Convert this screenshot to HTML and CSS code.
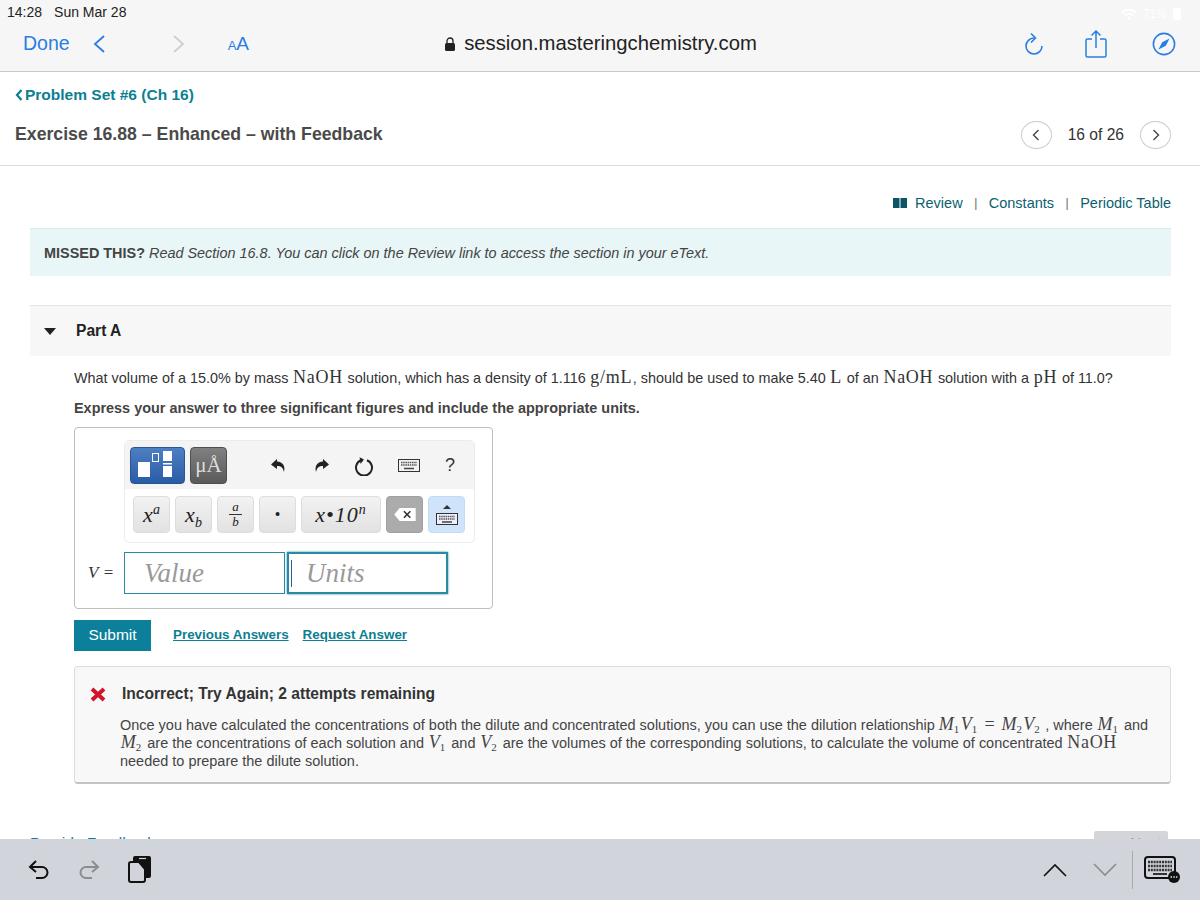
FILE: index.html
```html
<!DOCTYPE html>
<html lang="en">
<head>
  <meta charset="UTF-8">
  <title>Exercise 16.88</title>
  <link rel="stylesheet" href="styles.css">
</head>
<body>
  <div class="screen">
    <header class="browser">
      <div class="status">
        <span><span class="clock">14:28</span><span>Sun Mar 28</span></span>
        <span class="status-right">
          <svg width="16" height="12" viewBox="0 0 16 12"><path d="M1 4.500a10 10 0 0 1 14 0M4 7.500a6 6 0 0 1 8 0" fill="none" stroke="#fff" stroke-width="2"/><circle cx="8" cy="10" r="1.500" fill="#fff"/></svg>
          <span>71%</span>
          <svg width="8" height="12" viewBox="0 0 8 12"><rect width="8" height="12" rx="2" fill="#fff"/></svg>
        </span>
      </div>
      <div class="navbar">
        <div class="nav-left">
          <span class="done">Done</span>
          <svg class="chev" width="14" height="20" viewBox="0 0 14 20"><path d="M12 2 3 10l9 8" fill="none" stroke="#2a7de1" stroke-width="1.8"/></svg>
          <svg class="chev chev-next" width="14" height="20" viewBox="0 0 14 20"><path d="M2 2l9 8-9 8" fill="none" stroke="#cfcfcf" stroke-width="1.8"/></svg>
          <span class="aa"><small>A</small>A</span>
        </div>
        <div class="address">
          <svg width="12" height="14" viewBox="0 0 12 14"><rect x="1" y="6" width="10" height="8" rx="1.5" fill="#222"/><path d="M3 6V4a3 3 0 0 1 6 0v2" fill="none" stroke="#222" stroke-width="1.3"/></svg>
          <span>session.masteringchemistry.com</span>
        </div>
        <div class="nav-right">
          <svg class="reload" width="20" height="24" viewBox="0 0 20 24"><path d="M10 6A8 8 0 1 0 18 14" fill="none" stroke="#2a7de1" stroke-width="1.600"/><path d="M7 1.500 11.500 6 7 10.500" fill="none" stroke="#2a7de1" stroke-width="1.600"/></svg>
          <svg width="22" height="28" viewBox="0 0 22 28"><path d="M7 9H2.500A1.500 1.500 0 0 0 1 10.500v15A1.500 1.500 0 0 0 2.500 27h17a1.500 1.500 0 0 0 1.500-1.500v-15A1.500 1.500 0 0 0 19.500 9H15M11 18V1M6.500 5.500 11 1l4.500 4.500" fill="none" stroke="#2a7de1" stroke-width="1.500"/></svg>
          <svg width="24" height="24" viewBox="0 0 26 26"><circle cx="13" cy="13" r="11.500" fill="none" stroke="#2a7de1" stroke-width="1.700"/><path d="M19 7l-8 4-4 8 8-4z" fill="#2a7de1"/></svg>
        </div>
      </div>
    </header>

    <main class="page">
      <a class="crumb" href="#"><svg width="8" height="12" viewBox="0 0 8 12"><path d="M6.500 1 2 6l4.500 5" fill="none" stroke="#0c7f92" stroke-width="2.200"/></svg>Problem Set #6 (Ch 16)</a>

      <div class="title-row">
        <h1>Exercise 16.88 – Enhanced – with Feedback</h1>
        <div class="pager">
          <span class="round"><svg width="8" height="12" viewBox="0 0 8 12"><path d="M6.500 1 1.500 6l5 5" fill="none" stroke="#444" stroke-width="1.400"/></svg></span>
          <span class="count">16 of 26</span>
          <span class="round"><svg width="8" height="12" viewBox="0 0 8 12"><path d="M1.500 1l5 5-5 5" fill="none" stroke="#444" stroke-width="1.400"/></svg></span>
        </div>
      </div>

      <div class="links">
        <svg width="14" height="10" viewBox="0 0 14 10"><rect width="6.500" height="10" fill="#0b5566"/><rect x="7.500" width="6.500" height="10" fill="#0b5566"/></svg>
        <a href="#">Review</a><i>|</i><a href="#">Constants</a><i>|</i><a href="#">Periodic Table</a>
      </div>

      <div class="missed"><b>MISSED THIS?</b> <em>Read Section 16.8. You can click on the Review link to access the section in your eText.</em></div>

      <section class="part">
        <svg width="12" height="7" viewBox="0 0 12 7"><path d="M0 0h12L6 7z" fill="#222"/></svg>
        <strong>Part A</strong>
      </section>

      <div class="part-body">
        <p class="question">What volume of a 15.0% by mass <span class="tex">NaOH</span> solution, which has a density of 1.116 <span class="tex">g/mL</span>, should be used to make 5.40 <span class="tex">L</span> of an <span class="tex">NaOH</span> solution with a <span class="tex">pH</span> of 11.0?</p>
        <p class="express">Express your answer to three significant figures and include the appropriate units.</p>

        <div class="answer">
          <div class="palette">
            <div class="tools">
              <span class="mode mode-blue">
                <svg width="53" height="35" viewBox="0 0 53 35"><rect x="7" y="14" width="12" height="15" fill="#fff"/><rect x="21.500" y="5.500" width="6" height="8" fill="none" stroke="#fff"/><rect x="32" y="3" width="9" height="10" fill="#fff"/><rect x="32" y="15" width="9" height="1.500" fill="#fff"/><rect x="32" y="18" width="9" height="11" fill="#fff"/></svg>
              </span>
              <span class="mode mode-grey">μÅ</span>
              <span class="tool-icons">
                <svg width="18" height="18" viewBox="0 0 18 18"><path d="M7 2 1 7.500 7 12V9c4 0 6 1.500 7 6 1.500-6-1-10-7-10.500z" fill="#222"/></svg>
                <svg width="18" height="18" viewBox="0 0 18 18"><path d="M11 2l6 5.500-6 4.500V9c-4 0-6 1.500-7 6-1.500-6 1-10 7-10.500z" fill="#222"/></svg>
                <svg width="20" height="20" viewBox="0 0 20 20"><path d="M7 4.200a8 8 0 1 0 6 0" fill="none" stroke="#222" stroke-width="2"/><path d="M6 1v7l4-4z" fill="#222" transform="rotate(-8 7 4)"/></svg>
                <svg width="22" height="13" viewBox="0 0 22 13"><rect x=".5" y=".5" width="21" height="12" fill="#f2f2f2" stroke="#333"/><path d="M3 3.500h16M3 6h16" stroke="#555" stroke-width="1.500" stroke-dasharray="1.500 .7"/><path d="M6 9.500h10" stroke="#444" stroke-width="1.500"/></svg>
                <span class="help">?</span>
              </span>
            </div>
            <div class="keys">
              <span class="key"><i>x<sup>a</sup></i></span>
              <span class="key"><i>x<sub>b</sub></i></span>
              <span class="key frac"><i>a</i><i>b</i></span>
              <span class="key dot">•</span>
              <span class="key key-wide"><i>x•10<sup>n</sup></i></span>
              <span class="key key-del"><svg width="24" height="15" viewBox="0 0 22 14"><path d="M6 1h15v12H6L1 7z" fill="#fff"/><path d="M10 4l6 6m0-6-6 6" stroke="#333" stroke-width="1.500"/></svg></span>
              <span class="key key-kbd"><svg width="22" height="22" viewBox="0 0 22 22"><path d="M7 5l4-4 4 4z" fill="#333"/><rect x=".5" y="9.500" width="21" height="11" fill="#eef" stroke="#333"/><path d="M3 12.500h16M3 15h16" stroke="#555" stroke-width="1.500" stroke-dasharray="1.500 .7"/><path d="M6 18h10" stroke="#444" stroke-width="1.500"/></svg></span>
            </div>
          </div>
          <div class="entry">
            <span class="var"><i>V</i> =</span>
            <div class="field field-value">Value</div>
            <div class="field field-units"><span class="caret"></span>Units</div>
          </div>
        </div>

        <div class="actions">
          <button class="submit" type="button">Submit</button>
          <a href="#">Previous Answers</a>
          <a href="#">Request Answer</a>
        </div>

        <div class="feedback">
          <div class="fb-head">
            <svg width="16" height="15" viewBox="0 0 16 15"><path d="M2 2l12 11M14 2 2 13" stroke="#d0142c" stroke-width="4"/></svg>
            <b>Incorrect; Try Again; 2 attempts remaining</b>
          </div>
          <p>Once you have calculated the concentrations of both the dilute and concentrated solutions, you can use the dilution relationship <span class="tex tex-long"><i>M</i><sub>1</sub><i>V</i><sub>1</sub><span class="eq">=</span><i>M</i><sub>2</sub><i>V</i><sub>2</sub></span>, where <span class="tex"><i>M</i><sub>1</sub></span> and<br><span class="tex"><i>M</i><sub>2</sub></span> are the concentrations of each solution and <span class="tex"><i>V</i><sub>1</sub></span> and <span class="tex"><i>V</i><sub>2</sub></span> are the volumes of the corresponding solutions, to calculate the volume of concentrated <span class="tex">NaOH</span><br>needed to prepare the dilute solution.</p>
        </div>
      </div>

      <div class="below">
        <a href="#">Provide Feedback</a>
        <span class="next">Next &gt;</span>
      </div>
    </main>

    <footer class="kbdbar">
      <div class="kbd-left">
        <svg width="22" height="24" viewBox="0 0 22 24"><path d="M8 3 2 9l6 5M2 9h12a5.500 5.500 0 0 1 0 11H8" fill="none" stroke="#111" stroke-width="2"/></svg>
        <svg width="22" height="24" viewBox="0 0 22 24"><path d="M14 3l6 6-6 5M20 9H8a5.500 5.500 0 0 0 0 11h6" fill="none" stroke="#8b8d91" stroke-width="2"/></svg>
        <svg width="24" height="28" viewBox="0 0 24 28"><rect x="5" y="0" width="18" height="22" rx="2" fill="#111"/><path d="M11 2.500h7" stroke="#d1d4da" stroke-width="1.200"/><path d="M3 6h8l6 7v11a2 2 0 0 1-2 2H3a2 2 0 0 1-2-2V8a2 2 0 0 1 2-2z" fill="#d1d4da" stroke="#111" stroke-width="2"/></svg>
      </div>
      <div class="kbd-right">
        <svg width="24" height="14" viewBox="0 0 24 14"><path d="M1 13 12 2l11 11" fill="none" stroke="#111" stroke-width="1.600"/></svg>
        <svg width="24" height="14" viewBox="0 0 24 14"><path d="M1 1l11 11L23 1" fill="none" stroke="#8b8d91" stroke-width="1.600"/></svg>
        <span class="kbd-sep"></span>
        <svg width="38" height="28" viewBox="0 0 38 28"><rect x="1" y="1" width="30" height="21" rx="3" fill="none" stroke="#111" stroke-width="2"/><path d="M4 6h24M4 10h24M4 14h24" stroke="#333" stroke-width="2.500" stroke-dasharray="2 .8"/><path d="M9 18h14" stroke="#333" stroke-width="2"/><circle cx="30" cy="21" r="6" fill="#111"/><path d="M26.500 21h7" stroke="#ddd" stroke-width="1.500" stroke-dasharray="1.500 1.200"/></svg>
      </div>
    </footer>
  </div>
</body>
</html>
```
FILE: styles.css
```css
* {
  box-sizing: border-box;
}
html, body {
  margin: 0;
  height: 100%;
}
body {
  font-family: "Liberation Sans", Arial, sans-serif;
  color: #333;
  background-color: #fff;
}
a {
  text-decoration: none;
}
p {
  margin: 0;
}
.screen {
  width: 1200px;
  height: 900px;
  display: flex;
  flex-direction: column;
  overflow: hidden;
}

/* safari bar */
.browser {
  height: 72px;
  flex: none;
  background-color: #f6f6f6;
  border-bottom: 1px solid #c9c9c9;
}
.status {
  height: 24px;
  padding: 3px 19px 0 7px;
  font-size: 14px;
  line-height: 18px;
  color: #222;
  display: flex;
  justify-content: space-between;
}
.clock {
  margin-right: 12px;
}
.status-right {
  display: flex;
  align-items: center;
  gap: 6px;
  color: #fff;
  font-size: 12px;
}
.navbar {
  height: 47px;
  display: grid;
  grid-template-columns: 1fr auto 1fr;
  align-items: center;
  padding: 0 24px 8px 23px;
}
.nav-left {
  display: flex;
  align-items: center;
}
.done {
  font-size: 19.500px;
  color: #2a7de1;
  margin-right: 22px;
}
.chev-next {
  margin-left: 66px;
}
.aa {
  font-size: 19px;
  color: #2a7de1;
  margin-left: 42px;
}
.aa small {
  font-size: 13px;
}
.address {
  display: flex;
  align-items: center;
  gap: 8px;
  margin-left: 2px;
  font-size: 20.300px;
  color: #222;
}
.nav-right {
  display: flex;
  align-items: center;
  justify-content: flex-end;
  gap: 45px;
}
.reload {
  margin-right: -4px;
}

/* page */
.page {
  flex: 1;
  min-height: 0;
  overflow: hidden;
}
.crumb {
  display: flex;
  align-items: center;
  gap: 2px;
  margin: 14px 0 0 15px;
  height: 18px;
  font-size: 15.500px;
  font-weight: bold;
  color: #0c7f92;
}
.title-row {
  height: 62px;
  padding: 0 29px 0 15px;
  display: flex;
  align-items: center;
  justify-content: space-between;
  border-bottom: 1px solid #dedede;
}
h1 {
  margin: 0;
  font-size: 17.700px;
  font-weight: bold;
  color: #4a4a4a;
}
.pager {
  display: flex;
  align-items: center;
  gap: 16px;
  font-size: 15.600px;
}
.round {
  width: 31px;
  height: 28px;
  border: 1px solid #ccc;
  border-radius: 50%;
  display: flex;
  align-items: center;
  justify-content: center;
}
.links {
  height: 62px;
  padding: 12px 29px 0 0;
  display: flex;
  align-items: center;
  justify-content: flex-end;
  font-size: 14.500px;
  color: #666;
}
.links svg {
  margin-right: 8px;
}
.links a {
  color: #0b5f70;
}
.links i {
  font-style: normal;
  font-size: 12px;
  margin: 0 11.500px;
}
.missed {
  margin: 0 29px 0 30px;
  height: 48px;
  padding: 0 14px;
  display: flex;
  align-items: center;
  gap: 4px;
  background-color: #e8f6f7;
  border-top: 1px solid #dbe9ea;
  font-size: 14.430px;
  color: #444;
}
.part {
  margin: 29px 29px 0 30px;
  height: 51px;
  padding-left: 14px;
  display: flex;
  align-items: center;
  gap: 20px;
  background-color: #f7f7f7;
  border-top: 1px solid #e4e4e4;
  font-size: 15.600px;
  color: #222;
}
.part strong {
  font-weight: bold;
}
.part-body {
  margin: 0 29px 0 74px;
}
.question {
  margin-top: 11px;
  height: 22px;
  line-height: 22px;
  font-size: 14.400px;
  white-space: nowrap;
}
.tex {
  font-family: "Liberation Serif", "Times New Roman", serif;
  font-size: 18px;
  line-height: 0;
  letter-spacing: .7px;
  margin: 0 .7px;
}
.tex i {
  letter-spacing: 0;
}
.tex sub {
  font-size: 11px;
  line-height: 0;
  letter-spacing: 0;
  vertical-align: -2.500px;
  margin-right: 1.400px;
}
.tex-long {
  margin: 0 4px 0 0;
}
.eq {
  margin: 0 6px;
}
.express {
  margin-top: 10px;
  font-size: 14.430px;
  line-height: 18px;
  font-weight: bold;
  color: #444;
}

/* answer box */
.answer {
  width: 419px;
  height: 182px;
  margin-top: 10px;
  border: 1px solid #bdbdbd;
  border-radius: 4px;
  padding: 12px 0 0 49px;
}
.palette {
  width: 351px;
  height: 103px;
  border: 1px solid #ececec;
  border-radius: 5px;
}
.tools {
  height: 48px;
  padding: 6px 0 0 5px;
  display: flex;
  gap: 5px;
  background-color: #f4f4f4;
}
.mode {
  width: 37px;
  height: 37px;
  border-radius: 4px;
  display: flex;
  align-items: center;
  justify-content: center;
  color: #fff;
  font-family: "Liberation Serif", serif;
  font-size: 21px;
}
.mode-blue {
  width: 55px;
  background: linear-gradient(#4d7fc4, #2a5ca6);
  border: 1px solid #2a5590;
}
.mode-grey {
  color: #ddd;
  background: linear-gradient(#808080, #5a5a5a);
  border: 1px solid #4e4e4e;
}
.tool-icons {
  display: flex;
  align-items: center;
  gap: 24px;
  margin-left: 38px;
  height: 37px;
}
.help {
  font-size: 18px;
  color: #333;
  margin-left: 1px;
}
.keys {
  height: 53px;
  padding: 7px 0 0 8px;
  display: flex;
  gap: 5px;
}
.key {
  width: 37px;
  height: 37px;
  border: 1px solid #ddd;
  border-radius: 4px;
  background: linear-gradient(#f2f2f2, #e2e2e2);
  display: flex;
  align-items: center;
  justify-content: center;
  font-family: "Liberation Serif", serif;
  font-size: 22px;
  color: #222;
}
.key sup, .key sub {
  font-size: 14px;
  line-height: 0;
}
.frac {
  flex-direction: column;
  font-size: 13px;
}
.frac i:first-child {
  border-bottom: 1px solid #333;
  padding: 0 3px;
  line-height: 14px;
}
.frac i:last-child {
  line-height: 14px;
}
.dot {
  font-size: 16px;
}
.key-wide {
  width: 80px;
  letter-spacing: 1px;
}
.key-del {
  background: #ababab;
  border-color: #a0a0a0;
}
.key-kbd {
  background: #cfe4fa;
  border-color: #c3dcf5;
}
.entry {
  display: flex;
  align-items: center;
  margin: 9px 0 0 -36px;
}
.var {
  width: 36px;
  font-family: "Liberation Serif", serif;
  font-size: 17px;
  word-spacing: 1px;
  color: #333;
}
.field {
  height: 42px;
  width: 161px;
  font-family: "Liberation Serif", serif;
  font-style: italic;
  font-size: 27px;
  line-height: 40px;
  color: #999;
  border: 1px solid #2a8aa2;
  padding-left: 19px;
  background: #fff;
}
.field-units {
  margin-left: 2px;
  border-width: 2px;
  box-shadow: 0 0 2px #2a8aa2;
  padding-left: 17px;
  line-height: 38px;
  position: relative;
}
.caret {
  position: absolute;
  left: 2px;
  top: 6px;
  width: 1px;
  height: 27px;
  background-color: #2a5ca6;
}

/* submit + links */
.actions {
  margin-top: 11px;
  display: flex;
  align-items: center;
  gap: 14px;
  font-size: 13.400px;
  font-weight: bold;
}
.actions a {
  margin-bottom: 3px;
  color: #0c7f92;
  text-decoration: underline;
}
.submit {
  width: 77px;
  height: 31px;
  margin-right: 8px;
  padding: 0 0 2px;
  border: none;
  background-color: #0c7f9b;
  color: #fff;
  font-family: inherit;
  font-size: 15.500px;
}
.feedback {
  height: 118px;
  margin-top: 15px;
  border: 1px solid #ddd;
  border-bottom: 2px solid #c4c4c4;
  border-radius: 4px;
  background-color: #f8f8f8;
  padding: 18px 18px 0 15px;
  font-size: 14.480px;
  color: #444;
}
.fb-head {
  display: flex;
  align-items: center;
  gap: 16px;
  font-size: 15.600px;
  color: #333;
}
.feedback p {
  margin: 13px 0 0 30px;
  line-height: 18px;
  white-space: nowrap;
}

/* what is left of the page under the keyboard strip */
.below {
  margin: 47px 32px 0 30px;
  display: flex;
  justify-content: space-between;
  font-size: 15.500px;
}
.below a {
  margin-top: 3px;
  color: #0c7f92;
}
.next {
  width: 74px;
  height: 30px;
  padding: 3px 0 0 36px;
  background-color: #d4d5d8;
  border-radius: 2px 2px 0 0;
  color: #999;
}

/* ipad keyboard strip */
.kbdbar {
  height: 61px;
  flex: none;
  background-color: #d1d4da;
  display: flex;
  align-items: center;
  justify-content: space-between;
  padding: 0 18px 0 28px;
}
.kbd-left {
  display: flex;
  align-items: center;
  gap: 28px;
}
.kbd-right {
  display: flex;
  align-items: center;
}
.kbd-right svg:nth-child(2) {
  margin-left: 26px;
}
.kbd-sep {
  width: 1px;
  height: 38px;
  margin: 0 11px 0 15px;
  background-color: #aaa;
}
```
